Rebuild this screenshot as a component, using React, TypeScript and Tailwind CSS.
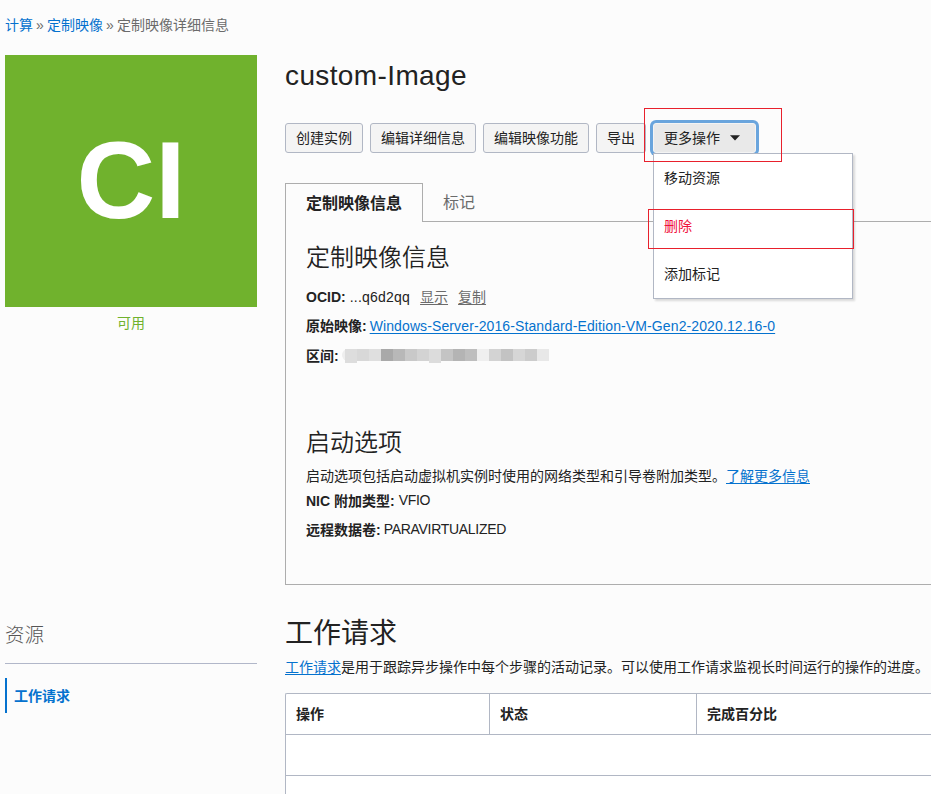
import React from "react";

const link = "text-[#0572ce] underline underline-offset-[2px] decoration-1";
const button =
  "flex h-[30px] shrink-0 items-center rounded-[3px] border border-[#b1b7c4] bg-[#f4f4f4] px-[10px] leading-none";

const redacted = [
  "h-[14px] bg-[#dddddd]", "h-3 bg-[#d8d8d8]", "h-3 bg-[#dfdfdf]", "h-3 bg-[#a9a9a9]", "h-3 bg-[#b8b8b8]",
  "h-3 bg-[#c9c9c9]", "h-3 bg-[#d3d3d3]", "h-[14px] bg-[#dcdcdc]", "h-3 bg-[#c4c4c4]", "h-3 bg-[#b4b4b4]",
  "h-3 bg-[#bebebe]", "h-3 bg-[#efefef]", "h-3 bg-[#d3d3d3]", "h-3 bg-[#c3c3c3]", "h-3 bg-[#d6d6d6]",
  "h-3 bg-[#cccccc]", "h-3 bg-[#e8e8e8]",
];

function Breadcrumb() {
  return (
    <nav className="flex h-[55px] items-start gap-1 pl-[5px] pt-[15px] leading-5 text-[#6b6b6b]">
      <a className="text-[#0572ce]">计算</a>
      <span className="w-[6px] -translate-x-px">»</span>
      <a className="text-[#0572ce]">定制映像</a>
      <span className="w-[6px] -translate-x-px">»</span>
      <span>定制映像详细信息</span>
    </nav>
  );
}

function Sidebar() {
  return (
    <aside className="ml-[5px] w-[252px] shrink-0">
      <div className="flex h-[252px] items-center justify-center bg-[#70b22d] pb-[1px] text-[109px] font-bold leading-none text-white">
        CI
      </div>
      <div className="mt-[6px] h-5 text-center leading-5 text-[#70b22d]">可用</div>
      <h2 className="mt-[287px] h-[44px] border-b border-[#b1b7c9] text-[19.5px] font-light leading-[30px] text-[#555]">资源</h2>
      <div className="mt-[14px] flex h-[35px] items-center border-l-2 border-[#0572ce] pl-[7px] pt-[2px] font-bold text-[#0572ce]">
        工作请求
      </div>
    </aside>
  );
}

function ActionMenu() {
  return (
    <div className="absolute left-0 top-[30px] z-10 h-[146px] w-[200px] border border-[#b1b7c4] bg-white pl-[10px] shadow-[2px_2px_2px_rgba(0,0,0,0.14)]">
      <div className="flex h-12 items-center">移动资源</div>
      <div className="flex h-12 items-center text-[#f0103c]">删除</div>
      <div className="flex h-12 items-center">添加标记</div>
    </div>
  );
}

function Actions() {
  return (
    <div className="mt-[25px] flex h-[30px] gap-[7px]">
      <button className={button}>创建实例</button>
      <button className={button}>编辑详细信息</button>
      <button className={button}>编辑映像功能</button>
      <button className={button}>导出</button>
      <div className="relative">
        <button className="flex h-[30px] w-[103px] items-center rounded-[3px] border border-[#f4f4f4] bg-[#e9e9e9] pl-[10px] leading-none shadow-[0_0_0_3px_#6aa5dd]">
          更多操作
          <svg className="ml-[10px]" width="10" height="6" viewBox="0 0 10 6">
            <path d="M0 .2h10L5 5.6z" fill="#222" />
          </svg>
        </button>
        <ActionMenu />
        <div className="absolute left-[-9px] top-[-15px] z-20 h-[54px] w-[138px] border border-[#e8202c]" />
        <div className="absolute left-[-5px] top-[86px] z-20 h-[40px] w-[206px] border border-[#e8202c]" />
      </div>
    </div>
  );
}

function Details() {
  return (
    <section className="mt-[30px]">
      <div className="flex h-[39px]">
        <div className="w-[138px] border-x border-t border-[#adadad] pl-5 text-[16px] font-bold leading-[40px]">定制映像信息</div>
        <div className="flex-1 border-b border-[#adadad] pl-5 text-[16px] leading-[40px] text-[#6b6b6b]">标记</div>
      </div>
      <div className="h-[363px] border-b border-l border-[#adadad] pl-5">
        <h2 className="h-[61px] pt-[18px] text-[24px] font-[350] leading-9">定制映像信息</h2>
        <div className="flex h-[29px] items-center whitespace-pre">
          <b>OCID:</b>
          <span className="ml-1 tracking-[0.22px]">...q6d2qq</span>
          <a className="ml-[10px] text-[#6b6b6b] underline underline-offset-[2px]">显示</a>
          <a className="ml-[10px] text-[#6b6b6b] underline underline-offset-[2px]">复制</a>
        </div>
        <div className="flex h-[29px] items-center whitespace-pre">
          <b>原始映像:</b>
          <a className={link + " ml-[3px] tracking-[0.11px]"}>Windows-Server-2016-Standard-Edition-VM-Gen2-2020.12.16-0</a>
        </div>
        <div className="flex h-[29px] items-center">
          <b className="w-[36px] pt-px">区间:</b>
          <div className="-mt-[2px] flex h-3 w-[207px] rounded-l-full bg-[#eee] pl-[3px]">
            {redacted.map((tone, i) => (
              <span key={i} className={"w-3 shrink-0 " + tone} />
            ))}
          </div>
        </div>
        <h2 className="mt-[55px] h-[39px] text-[24px] font-[350] leading-9">启动选项</h2>
        <p className="h-[23px] whitespace-nowrap leading-[24px]">
          启动选项包括启动虚拟机实例时使用的网络类型和引导卷附加类型。<a className={link}>了解更多信息</a>
        </p>
        <div className="flex h-[29px] items-center whitespace-pre">
          <b>NIC 附加类型:</b>
          <span className="-mt-[2px] ml-[4px] tracking-[-0.3px]">VFIO</span>
        </div>
        <div className="flex h-[29px] items-center whitespace-pre">
          <b>远程数据卷:</b>
          <span className="-mt-[2px] ml-[3px] tracking-[-0.3px]">PARAVIRTUALIZED</span>
        </div>
      </div>
    </section>
  );
}

function WorkRequests() {
  return (
    <section>
      <h2 className="mt-[29px] h-[41px] text-[28px] leading-[40px]">工作请求</h2>
      <p className="h-[24px] whitespace-nowrap leading-[24px]">
        <a className={link}>工作请求</a>是用于跟踪异步操作中每个步骤的活动记录。可以使用工作请求监视长时间运行的操作的进度。
      </p>
      <div className="mt-[14px] h-[101px] rounded-tl-[2px] border-l border-t border-[#b1b7c4] bg-white">
        <div className="flex h-[41px] border-b border-[#b1b7c4] font-bold leading-10">
          <div className="w-[204px] border-r border-[#b1b7c4] pl-[10px]">操作</div>
          <div className="w-[207px] border-r border-[#b1b7c4] pl-[10px]">状态</div>
          <div className="pl-[10px]">完成百分比</div>
        </div>
        <div className="h-[41px] border-b border-[#b1b7c4]" />
      </div>
    </section>
  );
}

export default function App() {
  return (
    <div className="h-[794px] w-full overflow-hidden bg-[#fcfcfc] font-['Liberation_Sans','Noto_Sans_CJK_SC',sans-serif] text-[14px] text-[#222]">
      <Breadcrumb />
      <div className="flex">
        <Sidebar />
        <main className="ml-[28px] min-w-0 flex-1">
          <h1 className="h-[43px] whitespace-nowrap text-[28px] leading-[42px] tracking-[0.38px]">custom-Image</h1>
          <Actions />
          <Details />
          <WorkRequests />
        </main>
      </div>
    </div>
  );
}
